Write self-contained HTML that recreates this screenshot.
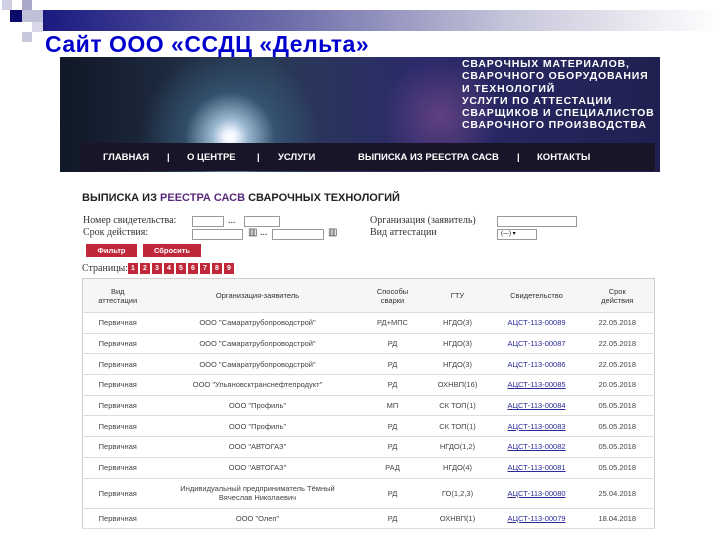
<!DOCTYPE html>
<html><head><meta charset="utf-8"><style>
*{margin:0;padding:0;box-sizing:border-box}
body{width:720px;height:540px;background:#fff;position:relative;overflow:hidden;font-family:"Liberation Sans",sans-serif}
.a{position:absolute}
.bar{left:43px;top:10px;width:677px;height:21px;background:linear-gradient(90deg,#1a1a80,#6a6aa8 35%,#c8c8dc 70%,#fff)}
.t{left:45px;top:31px;font-size:23px;font-weight:bold;color:#0000cc;letter-spacing:0.5px}
.ban{left:60px;top:57px;width:600px;height:115px;background:radial-gradient(circle at 170px 80px,#fff 0,#f0f4ff 6px,#9ab8d0 18px,rgba(60,100,130,.6) 45px,transparent 90px),radial-gradient(circle at 380px 60px,#604080 0,transparent 60px),linear-gradient(90deg,#101826,#2a3a55 35%,#2a2a6a 60%,#202050 100%)}
.bt{left:462px;top:58px;color:#fff;font-weight:bold;font-size:10.5px;line-height:12.3px;letter-spacing:.85px}
.nav{left:80px;top:143px;width:575px;height:28px;background:#1a1428;color:#fff;font-size:9.5px;font-weight:bold}
.nav span{position:absolute;top:9px}
.h{left:82px;top:192px;font-size:11px;color:#222;font-weight:bold}
.h b{color:#5a2a7a}
.f{font-family:"Liberation Serif",serif;font-size:10px;color:#333}
.in{position:absolute;border:1px solid #999;background:#fff;height:11px}
.btn{position:absolute;background:#c0283a;color:#fff;font-size:7.5px;font-weight:bold;text-align:center;line-height:13px;height:13px;top:244px}
.pg{position:absolute;top:263px;width:10px;height:11px;background:#c0283a;color:#fff;font-size:7px;text-align:center;line-height:11px;font-weight:bold}
table{position:absolute;left:82px;top:278px;width:573px;border-collapse:collapse;border:1px solid #ccc;font-size:7.5px;color:#444}
td,th{text-align:center;border-bottom:1px solid #ddd;height:20.7px;font-weight:normal}
th{background:#f6f6f6;height:34px;font-size:7.5px;color:#333}
td.l{color:#2a2a9a;text-decoration:underline}
</style></head><body>
<div class="a" style="left:2px;top:0;width:10px;height:10px;background:#d0d0e4"></div>
<div class="a" style="left:22px;top:0;width:10px;height:10px;background:#a8a8c8"></div>
<div class="a" style="left:10px;top:10px;width:12px;height:12px;background:#0a0a6a"></div>
<div class="a" style="left:22px;top:10px;width:21px;height:12px;background:#c0c0d8"></div>
<div class="a" style="left:32px;top:22px;width:11px;height:10px;background:#d8d8e8"></div>
<div class="a" style="left:22px;top:32px;width:10px;height:10px;background:#c8c8dc"></div>
<div class="a bar"></div>
<div class="a t">Сайт ООО «ССДЦ «Дельта»</div>
<div class="a ban"></div>
<div class="a bt">СВАРОЧНЫХ МАТЕРИАЛОВ,<br>СВАРОЧНОГО ОБОРУДОВАНИЯ<br>И ТЕХНОЛОГИЙ<br>УСЛУГИ ПО АТТЕСТАЦИИ<br>СВАРЩИКОВ И СПЕЦИАЛИСТОВ<br>СВАРОЧНОГО ПРОИЗВОДСТВА</div>
<div class="a nav"><span style="left:23px">ГЛАВНАЯ</span><span style="left:87px">|</span><span style="left:107px">О ЦЕНТРЕ</span><span style="left:177px">|</span><span style="left:198px">УСЛУГИ</span><span style="left:278px">ВЫПИСКА ИЗ РЕЕСТРА САСВ</span><span style="left:437px">|</span><span style="left:457px">КОНТАКТЫ</span></div>
<div class="a h">ВЫПИСКА ИЗ <b>РЕЕСТРА САСВ</b> СВАРОЧНЫХ ТЕХНОЛОГИЙ</div>
<div class="a f" style="left:83px;top:215px">Номер свидетельства:</div>
<div class="a f" style="left:83px;top:227px">Срок действия:</div>
<div class="a f" style="left:370px;top:215px">Организация (заявитель)</div>
<div class="a f" style="left:370px;top:227px">Вид аттестации</div>
<div class="in" style="left:192px;top:216px;width:32px"></div><div class="a f" style="left:228px;top:215px">...</div>
<div class="in" style="left:244px;top:216px;width:36px"></div>
<div class="in" style="left:192px;top:229px;width:51px"></div><div class="a f" style="left:248px;top:227px">▥ ...</div>
<div class="in" style="left:272px;top:229px;width:52px"></div><div class="a f" style="left:328px;top:227px">▥</div>
<div class="in" style="left:497px;top:216px;width:80px"></div>
<div class="in" style="left:497px;top:229px;width:40px;font-size:6px;line-height:9px;padding-left:3px">(---) ▾</div>
<div class="btn" style="left:86px;width:51px">Фильтр</div>
<div class="btn" style="left:143px;width:58px">Сбросить</div>
<div class="a f" style="left:82px;top:263px">Страницы:</div>
<div class="pg" style="left:128px">1</div><div class="pg" style="left:140px">2</div><div class="pg" style="left:152px">3</div><div class="pg" style="left:164px">4</div><div class="pg" style="left:176px">5</div><div class="pg" style="left:188px">6</div><div class="pg" style="left:200px">7</div><div class="pg" style="left:212px">8</div><div class="pg" style="left:224px">9</div>
<table>
<tr><th style="width:70px">Вид<br>аттестации</th><th style="width:210px">Организация-заявитель</th><th style="width:60px">Способы<br>сварки</th><th style="width:70px">ГТУ</th><th style="width:88px">Свидетельство</th><th>Срок<br>действия</th></tr>
<tr><td>Первичная</td><td>ООО "Самаратрубопроводстрой"</td><td>РД+МПС</td><td>НГДО(3)</td><td class="l" style="text-decoration:none">АЦСТ-113-00089</td><td>22.05.2018</td></tr>
<tr><td>Первичная</td><td>ООО "Самаратрубопроводстрой"</td><td>РД</td><td>НГДО(3)</td><td class="l" style="text-decoration:none">АЦСТ-113-00087</td><td>22.05.2018</td></tr>
<tr><td>Первичная</td><td>ООО "Самаратрубопроводстрой"</td><td>РД</td><td>НГДО(3)</td><td class="l" style="text-decoration:none">АЦСТ-113-00086</td><td>22.05.2018</td></tr>
<tr><td>Первичная</td><td>ООО "Ульяновсктранснефтепродукт"</td><td>РД</td><td>ОХНВП(16)</td><td class="l">АЦСТ-113-00085</td><td>20.05.2018</td></tr>
<tr><td>Первичная</td><td>ООО "Профиль"</td><td>МП</td><td>СК ТОП(1)</td><td class="l">АЦСТ-113-00084</td><td>05.05.2018</td></tr>
<tr><td>Первичная</td><td>ООО "Профиль"</td><td>РД</td><td>СК ТОП(1)</td><td class="l">АЦСТ-113-00083</td><td>05.05.2018</td></tr>
<tr><td>Первичная</td><td>ООО "АВТОГАЗ"</td><td>РД</td><td>НГДО(1,2)</td><td class="l">АЦСТ-113-00082</td><td>05.05.2018</td></tr>
<tr><td>Первичная</td><td>ООО "АВТОГАЗ"</td><td>РАД</td><td>НГДО(4)</td><td class="l">АЦСТ-113-00081</td><td>05.05.2018</td></tr>
<tr><td style="height:30px">Первичная</td><td>Индивидуальный предприниматель Тёмный<br>Вячеслав Николаевич</td><td>РД</td><td>ГО(1,2,3)</td><td class="l">АЦСТ-113-00080</td><td>25.04.2018</td></tr>
<tr><td>Первичная</td><td>ООО "Олеп"</td><td>РД</td><td>ОХНВП(1)</td><td class="l">АЦСТ-113-00079</td><td>18.04.2018</td></tr>
</table>
</body></html>
